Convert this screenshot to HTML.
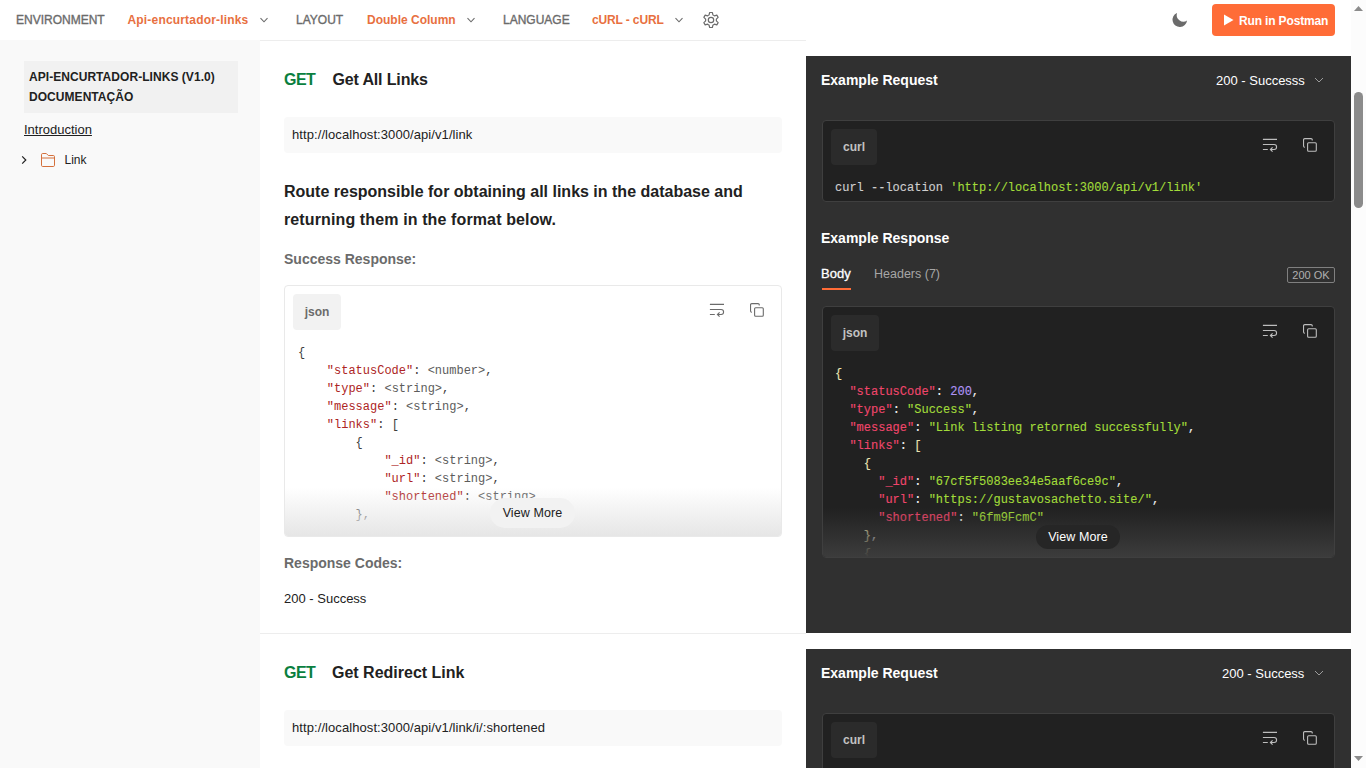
<!DOCTYPE html>
<html lang="en">
<head>
<meta charset="utf-8">
<title>api-encurtador-links (v1.0) Documentação</title>
<style>
*{box-sizing:border-box;margin:0;padding:0}
html,body{width:1366px;height:768px;overflow:hidden;background:#fff}
body{position:relative;font-family:"Liberation Sans",Arial,sans-serif;color:#212121;font-size:12px}
.abs{position:absolute;white-space:nowrap}
svg{display:block;position:absolute;overflow:visible}

/* header */
#hdr{position:absolute;left:0;top:0;width:1351px;height:40px;background:#fff}
#hdrline{position:absolute;left:260px;top:40px;width:546px;height:1px;background:#ededed}
.hl{position:absolute;top:13px;height:14px;line-height:14px;font-size:12px;color:#6b6b6b;white-space:nowrap;-webkit-text-stroke:.35px #6b6b6b}
.hv{position:absolute;top:13px;height:14px;line-height:14px;font-size:12px;color:#e8703f;font-weight:bold;white-space:nowrap}
#run{position:absolute;left:1212px;top:4px;width:123px;height:32px;border-radius:4px;background:#ff6c37;color:#fff;font-weight:bold;font-size:12px;line-height:32px;letter-spacing:-.15px}
#run span{position:absolute;left:27px;top:.5px;white-space:nowrap}

/* sidebar */
#side{position:absolute;left:0;top:40px;width:260px;height:728px;background:#f9f9f9}
#sbtitle{position:absolute;left:24px;top:60.500px;width:214px;height:52px;background:#f1f1f1}
#sbtitle div{position:absolute;left:5px;white-space:nowrap;font-weight:bold;font-size:12px;line-height:20px;color:#212121;letter-spacing:.05px}

/* main */
.h1get{font-size:16px;font-weight:bold;color:#0a7f3f;line-height:20px;letter-spacing:-.5px}
.h1t{font-size:16px;font-weight:bold;color:#212121;line-height:20px}
.urlbox{position:absolute;left:284px;width:498px;height:36px;background:#f9f9f9;border-radius:4px}
.urlbox span{position:absolute;left:8px;top:0;line-height:36px;font-size:13px;letter-spacing:.08px;color:#212121;white-space:nowrap}
.desc{font-size:16px;font-weight:bold;line-height:28px;color:#212121}
.sub{font-size:14px;font-weight:bold;color:#6b6b6b;line-height:20px}
.divider{position:absolute;left:260px;top:633px;width:546px;height:1px;background:#ededed}

/* code blocks */
.cb{position:absolute;border-radius:4px;overflow:hidden}
.cb.light{background:#fff;border:1px solid #e9e9e9}
.cb.dark{background:#212121;border:1px solid #3f3f3f}
.tag{position:absolute;left:8px;top:8px;height:36px;border-radius:4px;font-size:12px;font-weight:bold;line-height:36px;text-align:center}
.light .tag{background:#f2f2f2;color:#6b6b6b}
.dark .tag{background:#2b2b2b;color:#c2c2c2}
pre{position:absolute;font-family:"Liberation Mono","DejaVu Sans Mono",monospace;font-size:12px;line-height:18px;white-space:pre}
.light pre{color:#3d3d3d}
.light pre .k{color:#ad2424}
.light pre .v{color:#5c5c5c}
.dark pre{color:#f2f2f2;-webkit-text-stroke:.12px currentColor}
.dark pre .k{color:#f0466c}
.dark pre .n{color:#b094f5}
.dark pre .s{color:#a2dc3a}
.dark pre .c{color:#cfcfcf}
.dark pre .b{color:#ebe4b4}
.fade{position:absolute;left:0;right:0;bottom:0;height:49px}
.light .fade{background:linear-gradient(to bottom,rgba(230,230,230,0),rgba(230,230,230,1))}
.dark .fade{background:linear-gradient(to bottom,rgba(60,60,60,0),rgba(60,60,60,1))}
.vm{position:absolute;width:85px;height:30px;border-radius:15px;font-size:12.500px;letter-spacing:.1px;line-height:30px;text-align:center}
.light .vm{background:#f2f2f2;color:#212121}
.dark .vm{background:#262626;color:#fff}

/* right panel */
.panel{position:absolute;left:806px;width:545px;background:#303030}
.ph{font-size:14px;font-weight:bold;color:#fff;line-height:20px}
.sel{font-size:13px;color:#fff;line-height:20px}

/* scrollbar */
#sbar{position:absolute;left:1351px;top:0;width:15px;height:768px;background:#fcfcfc}
#thumb{position:absolute;left:3px;top:92px;width:9px;height:116px;border-radius:5px;background:#8b8b8b}
</style>
</head>
<body>

<!-- ================= HEADER ================= -->
<div id="hdr">
  <span class="hl" id="t_env" style="left:16px">ENVIRONMENT</span>
  <span class="hv" id="t_envv" style="left:127.500px;letter-spacing:.18px">Api-encurtador-links</span>
  <svg style="left:259px;top:15px" width="10" height="10" viewBox="0 0 10 10"><path d="M1.5 3.2 L5 6.8 L8.5 3.2" fill="none" stroke="#6b6b6b" stroke-width="1.1"/></svg>
  <span class="hl" id="t_lay" style="left:296px">LAYOUT</span>
  <span class="hv" id="t_layv" style="left:367px">Double Column</span>
  <svg style="left:466px;top:15px" width="10" height="10" viewBox="0 0 10 10"><path d="M1.5 3.2 L5 6.8 L8.5 3.2" fill="none" stroke="#6b6b6b" stroke-width="1.1"/></svg>
  <span class="hl" id="t_lang" style="left:503px">LANGUAGE</span>
  <span class="hv" id="t_langv" style="left:592px;letter-spacing:-.13px">cURL - cURL</span>
  <svg style="left:674px;top:15px" width="10" height="10" viewBox="0 0 10 10"><path d="M1.5 3.2 L5 6.8 L8.5 3.2" fill="none" stroke="#6b6b6b" stroke-width="1.1"/></svg>
  <!-- gear -->
  <svg style="left:703px;top:12px" width="16" height="16" viewBox="0 0 16 16"><g fill="none" stroke="#6b6b6b" stroke-width="1.2" stroke-linejoin="round"><path d="M9.94 2.96 L9.32 0.52 L6.68 0.52 L6.06 2.96 A5.4 5.4 0 0 0 4.60 3.80 L2.18 3.11 L0.86 5.40 L2.67 7.16 A5.4 5.4 0 0 0 2.67 8.84 L0.86 10.60 L2.18 12.89 L4.60 12.20 A5.4 5.4 0 0 0 6.06 13.04 L6.68 15.48 L9.32 15.48 L9.94 13.04 A5.4 5.4 0 0 0 11.40 12.20 L13.82 12.89 L15.14 10.60 L13.33 8.84 A5.4 5.4 0 0 0 13.33 7.16 L15.14 5.40 L13.82 3.11 L11.40 3.80 A5.4 5.4 0 0 0 9.94 2.96 Z"/><circle cx="8" cy="8" r="2.700"/></g></svg>
  <!-- moon -->
  <svg style="left:1172px;top:12px" width="16" height="16" viewBox="0 0 16 16"><path d="M5.03 .93A6.700 6.700 0 0 0 15.060 8.580 7.300 7.300 0 1 1 5.030 .930z" fill="#6b6b6b"/></svg>
  <div id="run">
    <svg style="left:11px;top:10px" width="11" height="12" viewBox="0 0 11 12"><path d="M1 .5 L10.500 6 L1 11.500z" fill="#fff"/></svg>
    <span id="t_run">Run in Postman</span>
  </div>
</div>
<div id="hdrline"></div>

<!-- ================= SIDEBAR ================= -->
<div id="side"></div>
<div id="sbtitle">
  <div id="t_sb1" style="top:6.500px">API-ENCURTADOR-LINKS (V1.0)</div>
  <div id="t_sb2" style="top:26.500px">DOCUMENTAÇÃO</div>
</div>
<span class="abs" id="t_intro" style="left:24px;top:122px;line-height:16px;font-size:13px;color:#212121;text-decoration:underline;text-underline-offset:1px">Introduction</span>
<svg style="left:19px;top:155px" width="10" height="10" viewBox="0 0 10 10"><path d="M3.2 1.400 L6.800 5 L3.200 8.600" fill="none" stroke="#212121" stroke-width="1.2"/></svg>
<svg style="left:41px;top:153px" width="14" height="14" viewBox="0 0 14 14"><path d="M.5 1.700a1.200 1.200 0 0 1 1.200-1.200h3.600l2 2h5a1.200 1.200 0 0 1 1.200 1.200v8.600a1.200 1.200 0 0 1-1.200 1.200H1.700a1.200 1.200 0 0 1-1.200-1.200zM.5 5h13" fill="none" stroke="#d4703c" stroke-width="1"/></svg>
<span class="abs" id="t_link" style="left:64.500px;top:152px;line-height:16px;font-size:12px;color:#212121">Link</span>

<!-- ================= MAIN COLUMN ================= -->
<span class="abs h1get" id="t_get1" style="left:284px;top:70px">GET</span>
<span class="abs h1t" id="t_h1" style="left:332.500px;top:70px;letter-spacing:-.15px">Get All Links</span>
<div class="urlbox" style="top:117px"><span id="t_url1">http://localhost:3000/api/v1/link</span></div>
<span class="abs desc" id="t_d1" style="left:284px;top:178px">Route responsible for obtaining all links in the database and</span>
<span class="abs desc" id="t_d2" style="left:284px;top:206px;letter-spacing:.12px">returning them in the format below.</span>
<span class="abs sub" id="t_sr" style="left:284px;top:249px">Success Response:</span>

<div class="cb light" style="left:284px;top:285px;width:498px;height:252px">
  <div class="tag" style="width:48px">json</div>
  <svg style="left:424px;top:17px" width="16" height="16" viewBox="0 0 16 16"><g fill="none" stroke="#6b6b6b" stroke-width="1.100"><path d="M.9 1.400H15M.9 6.500H12.100a2.500 2.500 0 0 1 0 5H8.600M.9 11.500H5.800"/><path d="M10.600 9.300 8.400 11.500l2.200 2.200"/></g></svg>
  <svg style="left:464px;top:16px" width="16" height="16" viewBox="0 0 16 16"><g fill="none" stroke="#6b6b6b" stroke-width="1.100"><rect x="5.600" y="5.700" width="8.700" height="8.500" rx="1"/><path d="M10.250 3.400V2.850a1.200 1.200 0 0 0-1.200-1.200H2.750a1.200 1.200 0 0 0-1.200 1.200V9.100a1.200 1.200 0 0 0 1.200 1.200h.2"/></g></svg>
<pre style="left:13px;top:58px">{
    <span class="k">"statusCode"</span>: <span class="v">&lt;number&gt;</span>,
    <span class="k">"type"</span>: <span class="v">&lt;string&gt;</span>,
    <span class="k">"message"</span>: <span class="v">&lt;string&gt;</span>,
    <span class="k">"links"</span>: [
        {
            <span class="k">"_id"</span>: <span class="v">&lt;string&gt;</span>,
            <span class="k">"url"</span>: <span class="v">&lt;string&gt;</span>,
            <span class="k">"shortened"</span>: <span class="v">&lt;string&gt;</span>
        },</pre>
  <div class="fade"></div>
  <div class="vm" style="left:205px;top:212px">View More</div>
</div>

<span class="abs sub" id="t_rc" style="left:284px;top:553px">Response Codes:</span>
<span class="abs" id="t_200" style="left:284px;top:591px;line-height:16px;font-size:13px;color:#212121">200 - Success</span>
<div class="divider"></div>

<span class="abs h1get" id="t_get2" style="left:284px;top:663px">GET</span>
<span class="abs h1t" id="t_h2" style="left:332px;top:663px">Get Redirect Link</span>
<div class="urlbox" style="top:710px"><span id="t_url2">http://localhost:3000/api/v1/link/i/:shortened</span></div>

<!-- ================= RIGHT PANEL 1 ================= -->
<div class="panel" style="top:56px;height:577px"></div>
<span class="abs ph" id="t_er1" style="left:821px;top:70px">Example Request</span>
<span class="abs sel" id="t_s1" style="left:1216px;top:71px">200 - Successs</span>
<svg style="left:1314px;top:75px" width="10" height="10" viewBox="0 0 10 10"><path d="M1 3 L5 7 L9 3" fill="none" stroke="#9c9c9c" stroke-width="1"/></svg>

<div class="cb dark" style="left:822px;top:120px;width:513px;height:82px">
  <div class="tag" style="width:46px">curl</div>
  <svg style="left:439px;top:17px" width="16" height="16" viewBox="0 0 16 16"><g fill="none" stroke="#bdbdbd" stroke-width="1.100"><path d="M.9 1.400H15M.9 6.500H12.100a2.500 2.500 0 0 1 0 5H8.600M.9 11.500H5.800"/><path d="M10.600 9.300 8.400 11.500l2.200 2.200"/></g></svg>
  <svg style="left:479px;top:16px" width="16" height="16" viewBox="0 0 16 16"><g fill="none" stroke="#bdbdbd" stroke-width="1.100"><rect x="5.600" y="5.700" width="8.700" height="8.500" rx="1"/><path d="M10.250 3.400V2.850a1.200 1.200 0 0 0-1.200-1.200H2.750a1.200 1.200 0 0 0-1.200 1.200V9.100a1.200 1.200 0 0 0 1.200 1.200h.2"/></g></svg>
<pre style="left:12px;top:58px"><span class="c">curl --location </span><span class="s">'http://localhost:3000/api/v1/link'</span></pre>
</div>

<span class="abs ph" id="t_eresp" style="left:821px;top:228px">Example Response</span>
<span class="abs" id="t_body" style="left:821px;top:265px;line-height:18px;font-size:13px;color:#fff;-webkit-text-stroke:.3px #fff">Body</span>
<div style="position:absolute;left:822px;top:288px;width:29px;height:2px;background:#ff6c37"></div>
<span class="abs" id="t_hdrs" style="left:874px;top:265px;line-height:18px;font-size:12.500px;color:#a6a6a6">Headers (7)</span>
<div class="abs" id="t_ok" style="left:1287px;top:267px;width:48px;height:16px;border:1px solid #808080;border-radius:2px;font-size:11px;line-height:14.500px;text-align:center;color:#b0b0b0">200 OK</div>

<div class="cb dark" style="left:822px;top:306px;width:513px;height:252px">
  <div class="tag" style="width:48px">json</div>
  <svg style="left:439px;top:17px" width="16" height="16" viewBox="0 0 16 16"><g fill="none" stroke="#bdbdbd" stroke-width="1.100"><path d="M.9 1.400H15M.9 6.500H12.100a2.500 2.500 0 0 1 0 5H8.600M.9 11.500H5.800"/><path d="M10.600 9.300 8.400 11.500l2.200 2.200"/></g></svg>
  <svg style="left:479px;top:16px" width="16" height="16" viewBox="0 0 16 16"><g fill="none" stroke="#bdbdbd" stroke-width="1.100"><rect x="5.600" y="5.700" width="8.700" height="8.500" rx="1"/><path d="M10.250 3.400V2.850a1.200 1.200 0 0 0-1.200-1.200H2.750a1.200 1.200 0 0 0-1.200 1.200V9.100a1.200 1.200 0 0 0 1.200 1.200h.2"/></g></svg>
<pre style="left:12px;top:57.600px"><span class="b">{</span>
  <span class="k">"statusCode"</span>: <span class="n">200</span>,
  <span class="k">"type"</span>: <span class="s">"Success"</span>,
  <span class="k">"message"</span>: <span class="s">"Link listing retorned successfully"</span>,
  <span class="k">"links"</span>: <span class="b">[</span>
    <span class="b">{</span>
      <span class="k">"_id"</span>: <span class="s">"67cf5f5083ee34e5aaf6ce9c"</span>,
      <span class="k">"url"</span>: <span class="s">"https://gustavosachetto.site/"</span>,
      <span class="k">"shortened"</span>: <span class="s">"6fm9FcmC"</span>
    <span class="b">}</span>,
    <span class="b">{</span></pre>
  <div class="fade"></div>
  <div class="vm" style="left:213px;top:217.500px;width:84px;height:24px;line-height:24px;border-radius:12px">View More</div>
</div>

<!-- ================= RIGHT PANEL 2 ================= -->
<div class="panel" style="top:649px;height:119px"></div>
<span class="abs ph" id="t_er2" style="left:821px;top:663px">Example Request</span>
<span class="abs sel" id="t_s2" style="left:1222px;top:664px">200 - Success</span>
<svg style="left:1314px;top:668px" width="10" height="10" viewBox="0 0 10 10"><path d="M1 3 L5 7 L9 3" fill="none" stroke="#9c9c9c" stroke-width="1"/></svg>
<div class="cb dark" style="left:822px;top:713px;width:513px;height:82px">
  <div class="tag" style="width:46px">curl</div>
  <svg style="left:439px;top:17px" width="16" height="16" viewBox="0 0 16 16"><g fill="none" stroke="#bdbdbd" stroke-width="1.100"><path d="M.9 1.400H15M.9 6.500H12.100a2.500 2.500 0 0 1 0 5H8.600M.9 11.500H5.800"/><path d="M10.600 9.300 8.400 11.500l2.200 2.200"/></g></svg>
  <svg style="left:479px;top:16px" width="16" height="16" viewBox="0 0 16 16"><g fill="none" stroke="#bdbdbd" stroke-width="1.100"><rect x="5.600" y="5.700" width="8.700" height="8.500" rx="1"/><path d="M10.250 3.400V2.850a1.200 1.200 0 0 0-1.200-1.200H2.750a1.200 1.200 0 0 0-1.200 1.200V9.100a1.200 1.200 0 0 0 1.200 1.200h.2"/></g></svg>
</div>

<!-- ================= SCROLLBAR ================= -->
<div id="sbar">
  <svg style="left:3px;top:6px" width="9" height="5" viewBox="0 0 9 5"><path d="M0 5 L4.500 0 L9 5z" fill="#8b8b8b"/></svg>
  <div id="thumb"></div>
  <svg style="left:3px;top:756px" width="9" height="5" viewBox="0 0 9 5"><path d="M0 0 L4.500 5 L9 0z" fill="#8b8b8b"/></svg>
</div>

</body>
</html>
